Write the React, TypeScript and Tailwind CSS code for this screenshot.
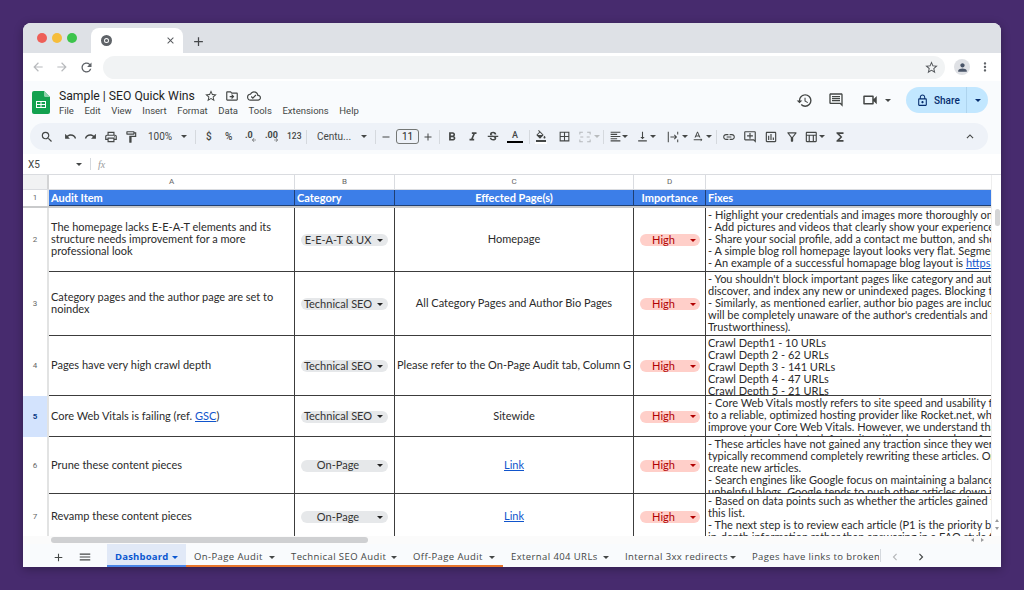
import React from "react";
import {
  MdSearch, MdUndo, MdRedo, MdOutlinePrint, MdOutlineFormatPaint, MdFormatBold, MdFormatItalic,
  MdStrikethroughS, MdOutlineFormatColorFill, MdBorderAll, MdFormatAlignLeft, MdVerticalAlignBottom,
  MdOutlineTextRotationNone, MdLink, MdOutlineAddComment, MdOutlineInsertChart, MdOutlineFilterAlt,
  MdOutlineFunctions, MdKeyboardArrowUp, MdHistory, MdOutlineComment, MdOutlineVideocam, MdLockOutline, MdStarBorder,
  MdOutlineDriveFileMove, MdOutlineCloudDone, MdAdd, MdMenu, MdChevronLeft, MdChevronRight, MdArrowBack, MdArrowForward,
  MdRefresh, MdPerson, MdMoreVert, MdClose, MdRemove, MdOutlineTableChart,
} from "react-icons/md";

const sheetFont = "font-['Lato','Open_Sans',sans-serif]";

function Caret({ className = "" }: { className?: string }) {
  return <span className={`block w-0 h-0 shrink-0 border-x-[3px] border-x-transparent border-t-[3px] ${className}`} />;
}

function ToolIcon({ Icon, size = 14, className = "" }: { Icon: any; size?: number; className?: string }) {
  return (
    <span className={`flex items-center justify-center text-[#444746] shrink-0 ${className}`}>
      <Icon size={size} />
    </span>
  );
}

function Sep({ className = "" }: { className?: string }) {
  return <span className={`w-px h-[14px] bg-[#d5d9de] shrink-0 ${className}`} />;
}

function MergeIcon() {
  return (
    <svg viewBox="0 0 14 14" className="w-[12px] h-[12px] ml-[8px] shrink-0" fill="none" stroke="#b5b8bb" strokeWidth="1.2">
      <path d="M1 4V1.500h3.500M9.500 1.500H13V4M1 10v2.500h3.500M9.500 12.500H13V10M5 7H1.500M9 7h3.500" />
    </svg>
  );
}

function WrapIcon() {
  return (
    <svg viewBox="0 0 14 14" className="w-[12px] h-[12px] ml-[11px] shrink-0" fill="none" stroke="#444746" strokeWidth="1.2">
      <path d="M1.500 1v12M12.500 1v3M12.500 10v3M4 7h7M8.500 4.500L11 7l-2.500 2.500" />
    </svg>
  );
}

function Toolbar() {
  return (
    <div className="h-[27px] ml-[7px] mr-[13px] rounded-full bg-[#eef2f8] flex items-center text-[#444746] font-['Roboto',sans-serif] text-[10px]">
      <ToolIcon Icon={MdSearch} className="w-[14px] ml-[10px]" />
      <ToolIcon Icon={MdUndo} className="w-[14px] ml-[9px]" size={13} />
      <ToolIcon Icon={MdRedo} className="w-[14px] ml-[6px]" size={13} />
      <ToolIcon Icon={MdOutlinePrint} className="w-[14px] ml-[7px]" />
      <ToolIcon Icon={MdOutlineFormatPaint} className="w-[14px] ml-[6px]" />
      <span className="ml-[10px] w-[24px]">100%</span>
      <Caret className="ml-[9px] border-t-[#444746]" />
      <Sep className="ml-[8px]" />
      <span className="ml-[10px] w-[6px] font-medium">$</span>
      <span className="ml-[13px] w-[10px] font-medium">%</span>
      <span className="ml-[10px] w-[13px] flex flex-col leading-[8px] text-[9px] font-bold">.0<MdArrowBack size={6} className="ml-[6px] -mt-[2px]" /></span>
      <span className="ml-[7px] w-[14px] flex flex-col leading-[8px] text-[9px] font-bold">.00<MdArrowForward size={6} className="ml-[8px] -mt-[2px]" /></span>
      <span className="ml-[8px] w-[13px] text-[8.5px] font-medium">123</span>
      <Sep className="ml-[6px]" />
      <span className="ml-[10px] w-[36px]">Centu...</span>
      <Caret className="ml-[8px] border-t-[#444746]" />
      <Sep className="ml-[8px]" />
      <MdRemove size={12} className="ml-[4px] shrink-0" />
      <span className="ml-[4px] w-[23px] h-[15px] shrink-0 rounded-[3px] border border-[#747775] flex items-center justify-center text-[10px] text-[#1f1f1f]">11</span>
      <MdAdd size={12} className="ml-[3px] shrink-0" />
      <Sep className="ml-[5px]" />
      <ToolIcon Icon={MdFormatBold} className="w-[14px] ml-[5px]" />
      <ToolIcon Icon={MdFormatItalic} className="w-[14px] ml-[7px]" />
      <ToolIcon Icon={MdStrikethroughS} className="w-[14px] ml-[6px]" />
      <span className="ml-[7px] w-[16px] h-[14px] shrink-0 flex flex-col items-center text-[9px] leading-[11px] font-medium text-[#444746]">A<span className="w-[16px] h-[2px] bg-black" /></span>
      <Sep className="ml-[6px]" />
      <span className="ml-[4px] w-[14px] shrink-0 flex flex-col items-center">
        <MdOutlineFormatColorFill size={12} />
        <span className="w-[12px] h-[2px] bg-white" />
      </span>
      <ToolIcon Icon={MdBorderAll} className="w-[14px] ml-[9px]" size={13} />
      <MergeIcon />
      <Caret className="ml-[3px] border-t-[#b8bbbd]" />
      <Sep className="ml-[3px]" />
      <ToolIcon Icon={MdFormatAlignLeft} className="w-[14px] ml-[4px]" size={13} />
      <Caret className="ml-[0px] border-t-[#444746]" />
      <ToolIcon Icon={MdVerticalAlignBottom} className="w-[14px] ml-[7px]" size={13} />
      <Caret className="ml-[1px] border-t-[#444746]" />
      <WrapIcon />
      <Caret className="ml-[3px] border-t-[#444746]" />
      <ToolIcon Icon={MdOutlineTextRotationNone} className="w-[14px] ml-[2px]" size={13} />
      <Caret className="ml-[2px] border-t-[#444746]" />
      <Sep className="ml-[4px]" />
      <ToolIcon Icon={MdLink} className="w-[14px] ml-[5px]" />
      <ToolIcon Icon={MdOutlineAddComment} className="w-[14px] ml-[7px]" />
      <ToolIcon Icon={MdOutlineInsertChart} className="w-[14px] ml-[7px]" />
      <ToolIcon Icon={MdOutlineFilterAlt} className="w-[14px] ml-[7px]" />
      <ToolIcon Icon={MdOutlineTableChart} className="w-[14px] ml-[5px]" />
      <Caret className="ml-[1px] border-t-[#444746]" />
      <ToolIcon Icon={MdOutlineFunctions} className="w-[14px] ml-[8px]" />
      <ToolIcon Icon={MdKeyboardArrowUp} className="w-[14px] ml-auto mr-[11px]" size={15} />
    </div>
  );
}

function Chip({ label, red = false }: { label: string; red?: boolean }) {
  return (
    <span className={`flex items-center h-[12px] rounded-full ${red ? "w-[60px] bg-[#ffcfc9] text-[#b10202]" : "w-[87px] bg-[#e6e8ea] text-[#333]"}`}>
      <span className={`text-center whitespace-nowrap ${red ? "w-[48px]" : "w-[74px]"}`}>{label}</span>
      <Caret className={`ml-[2px] ${red ? "border-t-[#b10202]" : "border-t-[#222]"}`} />
    </span>
  );
}

type Row = {
  n: number; h: string; a: React.ReactNode; b: string; c: React.ReactNode; e: React.ReactNode[]; sel?: boolean;
};

const blue = "text-[#1155cc] underline";

const rows: Row[] = [
  {
    n: 2, h: "h-[64px]", a: "The homepage lacks E-E-A-T elements and its structure needs improvement for a more professional look", b: "E-E-A-T & UX", c: "Homepage",
    e: [
      "- Highlight your credentials and images more thoroughly on your",
      "- Add pictures and videos that clearly show your experience in the",
      "- Share your social profile, add a contact me button, and show",
      "- A simple blog roll homepage layout looks very flat. Segment it",
      <>- An example of a successful homapage blog layout is <span className={blue}>https://example</span></>,
    ],
  },
  {
    n: 3, h: "h-[64px]", a: "Category pages and the author page are set to noindex", b: "Technical SEO", c: "All Category Pages and Author Bio Pages",
    e: [
      "- You shouldn't block important pages like category and author",
      "discover, and index any new or unindexed pages. Blocking them",
      "- Similarly, as mentioned earlier, author bio pages are included",
      "will be completely unaware of the author's credentials and their",
      "Trustworthiness).",
    ],
  },
  {
    n: 4, h: "h-[60px]", a: "Pages have very high crawl depth", b: "Technical SEO", c: "Please refer to the On-Page Audit tab, Column G",
    e: ["Crawl Depth1 - 10 URLs", "Crawl Depth 2 - 62 URLs", "Crawl Depth 3 - 141 URLs", "Crawl Depth 4 - 47 URLs", "Crawl Depth 5 - 21 URLs"],
  },
  {
    n: 5, h: "h-[41px]", sel: true, a: <>Core Web Vitals is failing (ref. <span className={blue}>GSC</span>)</>, b: "Technical SEO", c: "Sitewide",
    e: [
      "- Core Web Vitals mostly refers to site speed and usability for your",
      "to a reliable, optimized hosting provider like Rocket.net, which can",
      "improve your Core Web Vitals. However, we understand that this",
      "may not be a simple task for a site with a large number of pages",
    ],
  },
  {
    n: 6, h: "h-[57px]", a: "Prune these content pieces", b: "On-Page", c: <span className={blue}>Link</span>,
    e: [
      "- These articles have not gained any traction since they were",
      "typically recommend completely rewriting these articles. Or you can",
      "create new articles.",
      "- Search engines like Google focus on maintaining a balance and",
      "unhelpful blogs. Google tends to push other articles down in the",
    ],
  },
  {
    n: 7, h: "h-[46px]", a: "Revamp these content pieces", b: "On-Page", c: <span className={blue}>Link</span>,
    e: [
      "- Based on data points such as whether the articles gained traffic",
      "this list.",
      "- The next step is to review each article (P1 is the priority batch",
      "in-depth information rather than answering in a FAQ style for the",
    ],
  },
];

function SheetRow({ r }: { r: Row }) {
  return (
    <div className={`flex shrink-0 ${r.h} border-b border-[#3c3c3c]`}>
      <div className={`w-[26px] shrink-0 flex items-center justify-center text-[8px] font-['Roboto',sans-serif] border-r-2 -mb-px border-[#e2e3e3] ${r.sel ? "bg-[#d3e3fd] font-bold text-[#0b3a86]" : "bg-white text-[#666]"}`}>{r.n}</div>
      <div className="w-[246px] shrink-0 flex items-center px-[2px] pb-px border-r border-[#3c3c3c] overflow-hidden"><p className="leading-[12px]">{r.a}</p></div>
      <div className="w-[100px] shrink-0 flex items-center justify-center pt-px border-r border-[#3c3c3c] overflow-hidden"><Chip label={r.b} /></div>
      <div className="w-[239px] shrink-0 flex items-center justify-center text-center border-r border-[#3c3c3c] overflow-hidden whitespace-nowrap">{r.c}</div>
      <div className="w-[72px] shrink-0 flex items-center justify-center pt-px border-r border-[#3c3c3c] overflow-hidden"><Chip label="High" red /></div>
      <div className="w-[285px] shrink-0 pl-[2px] pt-[1px] overflow-hidden whitespace-nowrap leading-[12px]">
        {r.e.map((l, i) => <div key={i}>{l}</div>)}
      </div>
    </div>
  );
}

function Grid() {
  return (
    <div className={`flex-1 min-h-0 flex flex-col ${sheetFont} text-[11px] text-[#2b2b2b] bg-white`}>
      <div className="flex h-[361px] overflow-hidden">
        <div className="w-[968px] shrink-0 flex flex-col overflow-hidden">
          <div className="flex h-[15px] shrink-0 text-[8px] text-[#666] font-['Roboto',sans-serif] border-b border-[#dadce0]">
            <div className="w-[26px] bg-[#f1f2f3] border-r-2 border-[#d3d4d5]" />
            <div className="w-[246px] flex items-center justify-center border-r border-[#dadce0]">A</div>
            <div className="w-[100px] flex items-center justify-center border-r border-[#dadce0]">B</div>
            <div className="w-[239px] flex items-center justify-center border-r border-[#dadce0]">C</div>
            <div className="w-[72px] flex items-center justify-center border-r border-[#dadce0]">D</div>
          </div>
          <div className="flex h-[16px] shrink-0 font-bold text-white">
            <div className="w-[26px] bg-white border-r-2 border-[#e2e3e3] flex items-center justify-center text-[8px] font-normal text-[#666] font-['Roboto',sans-serif]">1</div>
            <div className="w-[246px] bg-[#3c7ee8] border-r border-b border-[#1f3f73] px-[2px] leading-[15px]">Audit Item</div>
            <div className="w-[100px] bg-[#3c7ee8] border-r border-b border-[#1f3f73] px-[2px] leading-[15px]">Category</div>
            <div className="w-[239px] bg-[#3c7ee8] border-r border-b border-[#1f3f73] text-center leading-[15px]">Effected Page(s)</div>
            <div className="w-[72px] bg-[#3c7ee8] border-r border-b border-[#1f3f73] text-center leading-[15px]">Importance</div>
            <div className="w-[285px] bg-[#3c7ee8] border-b border-[#1f3f73] px-[2px] leading-[15px]">Fixes</div>
          </div>
          <div className="h-[2px] shrink-0 bg-[#c9cacb]" />
          {rows.map((r) => <SheetRow key={r.n} r={r} />)}
        </div>
        <div className="w-[10px] shrink-0 pt-[34px] pl-[3px] pb-[6px] border-l border-[#eeeeee] flex flex-col">
          <div className="w-[5px] h-[17px] rounded-full bg-[#d4d5d6]" />
          <span className="mt-auto block w-0 h-0 border-x-[2px] border-x-transparent border-b-[3px] border-b-[#9a9b9d]" />
          <span className="mt-[5px] block w-0 h-0 border-x-[2px] border-x-transparent border-t-[3px] border-t-[#9a9b9d]" />
        </div>
      </div>
      <div className="h-[8px] shrink-0 pl-[28px] py-[1px] bg-[#fbfbfb] flex items-center">
        <div className="w-[317px] h-[6px] rounded-full bg-[#cfd0d2]" />
        <span className="ml-auto block w-0 h-0 border-y-[2px] border-y-transparent border-r-[3px] border-r-[#9a9b9d]" />
        <span className="ml-[7px] mr-[17px] block w-0 h-0 border-y-[2px] border-y-transparent border-l-[3px] border-l-[#9a9b9d]" />
      </div>
    </div>
  );
}

type Tab = { label: string; w: string; orange?: boolean; active?: boolean };
const tabs: Tab[] = [
  { label: "Dashboard", w: "w-[79px]", active: true },
  { label: "On-Page Audit", w: "w-[97px]", orange: true },
  { label: "Technical SEO Audit", w: "w-[122px]", orange: true },
  { label: "Off-Page Audit", w: "w-[98px]", orange: true },
  { label: "External 404 URLs", w: "w-[114px]" },
  { label: "Internal 3xx redirects", w: "w-[127px]" },
];

function SheetTabs() {
  return (
    <div className="h-[23px] shrink-0 bg-[#f9fbfd] flex items-stretch font-['Open_Sans',sans-serif] text-[9.5px] tracking-[0.4px] text-[#444746]">
      <div className="w-[84px] flex items-center shrink-0 pt-[3px]">
        <MdAdd size={13} className="ml-[29px]" />
        <MdMenu size={14} className="ml-[13px]" />
      </div>
      {tabs.map((t) => (
        <div key={t.label} className={`${t.w} shrink-0 flex items-center pl-[8px] pt-[5px] whitespace-nowrap border-b-2 ${t.active ? "bg-[#e1e9f7] text-[#0b57d0] font-bold tracking-[0.2px] border-[#4a86e8]" : t.orange ? "border-[#e8762c]" : "border-transparent"}`}>
          <span className="flex-1">{t.label}</span>
          <Caret className={`mr-[8px] ${t.active ? "border-t-[#0b57d0]" : "border-t-[#444746]"}`} />
        </div>
      ))}
      <div className="ml-[8px] w-[127px] flex items-center pt-[3px] overflow-hidden whitespace-nowrap">Pages have links to broken</div>
      <div className="ml-px my-[5px] w-px bg-[#d5d9de]" />
      <div className="flex items-center pt-[3px]">
        <MdChevronLeft size={14} className="ml-[7px] text-[#b5b7b9]" />
        <MdChevronRight size={14} className="ml-[12px]" />
      </div>
    </div>
  );
}

export default function App() {
  return (
    <div className="w-[1024px] h-[590px] bg-[#472b6e] pt-[23px] pl-[23px] overflow-hidden">
      <div className="w-[978px] h-[544px] rounded-t-[8px] overflow-hidden flex flex-col bg-white shadow-[0_2px_10px_rgba(0,0,0,0.3)]">
        <div className="h-[30px] shrink-0 bg-[#dee1e6] flex items-end">
          <div className="flex gap-[5px] ml-[14px] mb-[10px]">
            <span className="w-[10px] h-[10px] rounded-full bg-[#ee5f58]" />
            <span className="w-[10px] h-[10px] rounded-full bg-[#f6bd3b]" />
            <span className="w-[10px] h-[10px] rounded-full bg-[#3cc44c]" />
          </div>
          <div className="ml-[14px] w-[92px] h-[25px] bg-white rounded-t-[8px] flex items-center">
            <span className="ml-[10px] w-[11px] h-[11px] rounded-full border-[3px] border-[#5f6368] flex items-center justify-center"><span className="w-[3px] h-[3px] rounded-full bg-[#5f6368]" /></span>
            <MdClose size={11} className="ml-[53px] text-[#55585c]" />
          </div>
          <MdAdd size={15} className="ml-[8px] mb-[4px] text-[#45474a]" />
        </div>
        <div className="h-[28px] shrink-0 bg-white flex items-center">
          <MdArrowBack size={14} className="ml-[8px] text-[#b8babd]" />
          <MdArrowForward size={14} className="ml-[10px] text-[#b8babd]" />
          <MdRefresh size={15} className="ml-[10px] text-[#5f6368]" />
          <div className="ml-[9px] w-[842px] h-[23px] rounded-full bg-[#f1f3f4] flex items-center justify-end pr-[6px]">
            <MdStarBorder size={15} className="text-[#55585c]" />
          </div>
          <span className="ml-[9px] w-[16px] h-[16px] rounded-full bg-[#dfe1e5] flex items-center justify-center"><MdPerson size={13} className="text-[#4a5568]" /></span>
          <MdMoreVert size={14} className="ml-[8px] text-[#5f6368]" />
        </div>
        <div className="bg-[#f9fbfd] shrink-0 flex flex-col">
          <div className="h-[42px] flex items-center">
            <svg viewBox="0 0 18 23" className="w-[18px] h-[23px] ml-[9px] shrink-0">
              <path d="M2 0h10l6 6v15a2 2 0 0 1-2 2H2a2 2 0 0 1-2-2V2a2 2 0 0 1 2-2z" fill="#12a14f" />
              <path d="M12 0l6 6h-4.500A1.500 1.500 0 0 1 12 4.500z" fill="#8ed1ab" />
              <path d="M4 10h10v7H4zM5 11v2h3.500v-2zM9.500 11v2H13v-2zM5 14v2h3.500v-2zM9.500 14v2H13v-2z" fill="#fff" fillRule="evenodd" />
            </svg>
            <div className="ml-[9px] w-[308px] shrink-0 font-['Roboto',sans-serif]">
              <div className="flex items-center h-[18px] text-[#1f1f1f] text-[12.2px] whitespace-nowrap">
                <span className="w-[145px]">Sample | SEO Quick Wins</span>
                <MdStarBorder size={14} className="text-[#444746]" />
                <MdOutlineDriveFileMove size={14} className="ml-[7px] text-[#444746]" />
                <MdOutlineCloudDone size={14} className="ml-[8px] text-[#444746]" />
              </div>
              <div className="flex gap-[10.6px] h-[12px] items-center text-[9.5px] text-[#444746] whitespace-nowrap">
                <span>File</span><span>Edit</span><span>View</span><span>Insert</span><span>Format</span><span>Data</span><span>Tools</span><span>Extensions</span><span>Help</span>
              </div>
            </div>
            <div className="ml-auto mb-[4px] mr-[13px] flex items-center">
              <MdHistory size={17} className="text-[#444746]" />
              <MdOutlineComment size={16} className="ml-[15px] text-[#444746]" />
              <MdOutlineVideocam size={18} className="ml-[17px] text-[#444746]" />
              <Caret className="ml-[6px] border-t-[#444746]" />
              <div className="ml-[15px] w-[82px] h-[26px] rounded-full bg-[#c2e7ff] flex items-center text-[#062e6f] text-[10px] font-['Roboto',sans-serif] font-medium">
                <MdLockOutline size={13} className="ml-[10px]" />
                <span className="ml-[5px] w-[26px]">Share</span>
                <span className="ml-[6px] w-px h-[26px] bg-[#aed4ee]" />
                <Caret className="ml-[8px] border-t-[#062e6f]" />
              </div>
            </div>
          </div>
          <Toolbar />
          <div className="h-[4px]" />
        </div>
        <div className="h-[21px] shrink-0 bg-white border-b border-[#dadce0] flex items-center font-['Roboto',sans-serif] text-[10px] text-[#444746]">
          <span className="ml-[5px] w-[47px]">X5</span>
          <Caret className="ml-[1px] border-t-[#444746]" />
          <span className="ml-[8px] w-px h-[12px] bg-[#d5d9de]" />
          <span className="ml-[7px] text-[10px] italic font-['Liberation_Serif',serif] text-[#9a9b9c]">fx</span>
        </div>
        <Grid />
        <SheetTabs />
      </div>
    </div>
  );
}
